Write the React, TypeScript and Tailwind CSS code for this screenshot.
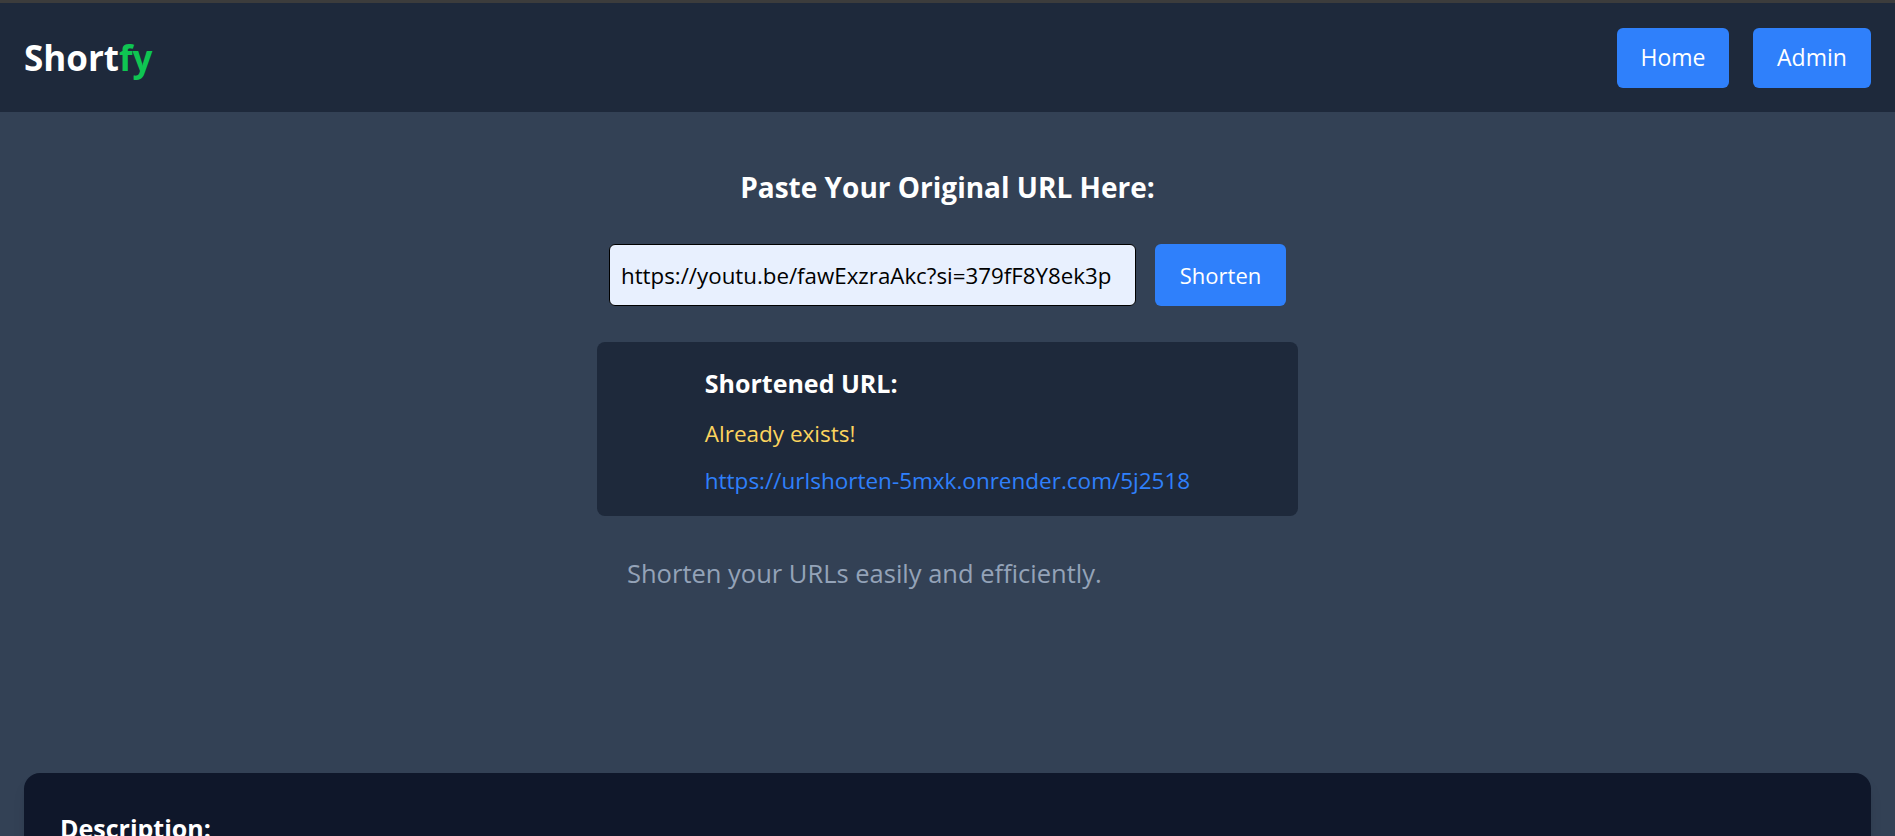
const FONT = "font-['Open_Sans','Noto_Sans',sans-serif]";

const Header = () => (
  <header className="flex items-center justify-between bg-[#1e293b] border-t-[3px] border-[#3c3c3c] h-[112px] px-6">
    <h1 className="text-[35px] font-bold text-white leading-none">
      Short<span className="text-[#0fc552]">fy</span>
    </h1>
    <nav className="flex items-center gap-6">
      <button className="h-[60px] w-[112px] rounded-md bg-[#2f80fb] text-[23px] text-white">Home</button>
      <button className="h-[60px] w-[118px] rounded-md bg-[#2f80fb] text-[23px] text-white">Admin</button>
    </nav>
  </header>
);

export default function App() {
  return (
    <div className={`${FONT} min-h-screen bg-[#334155]`}>
      <Header />

      <main className="flex flex-col items-center pt-[57px]">
        <h2 className="text-[28px] font-bold text-white leading-[36px]">Paste Your Original URL Here:</h2>

        <div className="mt-[39px] flex items-center gap-[19px]">
          <input
            readOnly
            value="https://youtu.be/fawExzraAkc?si=379fF8Y8ek3p"
            className="h-[62px] w-[527px] rounded-md border border-black bg-[#e8f0fe] px-[11px] text-[22.3px] text-black outline-none"
          />
          <button className="h-[62px] w-[131px] rounded-md bg-[#2f80fb] text-[22px] text-white">Shorten</button>
        </div>

        <div className="mt-[36px] flex w-[701px] flex-col items-center rounded-lg bg-[#1e293b] pt-[26px] pb-[20px]">
          <div className="flex flex-col text-left">
            <h3 className="text-[25px] font-bold leading-[30px] text-white">Shortened URL:</h3>
            <p className="mt-[21px] text-[22.5px] leading-[30px] text-[#fcd45e]">Already exists!</p>
            <a href="#" className="mt-[17px] text-[22.5px] leading-[30px] text-[#2f80fb]">
              https://urlshorten-5mxk.onrender.com/5j2518
            </a>
          </div>
        </div>

        <div className="mt-[39px] w-[701px] pl-[30px]">
          <p className="text-[25.5px] leading-[36px] text-[#94a3b8]">Shorten your URLs easily and efficiently.</p>
        </div>
      </main>

      <section className="mx-6 mt-[182px] rounded-2xl bg-[#0f172a] px-9 pt-[37px] pb-10 shadow-lg">
        <h3 className="text-[25px] font-bold text-white">Description:</h3>
        <p className="mt-4 text-[20px] text-[#cbd5e1]">
          Shortfy turns long links into short ones you can share anywhere.
        </p>
      </section>
    </div>
  );
}
